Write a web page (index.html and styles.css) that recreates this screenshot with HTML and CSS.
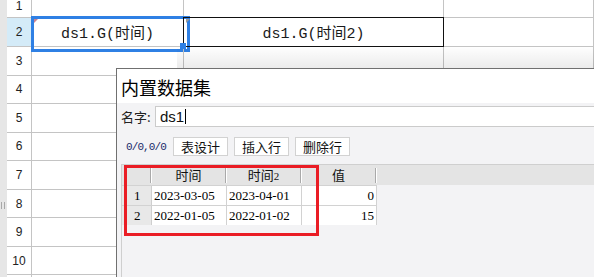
FILE: index.html
```html
<!doctype html>
<html lang="zh-CN">
  <head>
    <meta charset="UTF-8" />
    <meta name="viewport" content="width=device-width, initial-scale=1.0" />
    <title>内置数据集</title>
    <link rel="stylesheet" href="styles.css">
  </head>
  <body>
    <div class="sheet">
      <div class="row r1">
        <div class="gut"></div><div class="rh">1</div><div class="c ca"></div><div class="c cb"></div><div class="c cc"></div>
      </div>
      <div class="row r2">
        <div class="gut"></div><div class="rh sel">2</div>
        <div class="c ca active"><span class="flag red"></span>ds1.G(时间)<span class="handle"></span></div>
        <div class="c cb boxed"><span class="flag gray"></span>ds1.G(时间2)</div>
        <div class="c cc"></div>
      </div>
      <div class="row"><div class="gut"></div><div class="rh">3</div><div class="c ca"></div><div class="c cb"></div><div class="c cc"></div></div>
      <div class="row"><div class="gut"></div><div class="rh">4</div><div class="c ca"></div><div class="c cb"></div><div class="c cc"></div></div>
      <div class="row"><div class="gut"></div><div class="rh">5</div><div class="c ca"></div><div class="c cb"></div><div class="c cc"></div></div>
      <div class="row"><div class="gut"></div><div class="rh">6</div><div class="c ca"></div><div class="c cb"></div><div class="c cc"></div></div>
      <div class="row"><div class="gut"></div><div class="rh">7</div><div class="c ca"></div><div class="c cb"></div><div class="c cc"></div></div>
      <div class="row"><div class="gut"><span class="grip"></span></div><div class="rh">8</div><div class="c ca"></div><div class="c cb"></div><div class="c cc"></div></div>
      <div class="row"><div class="gut"></div><div class="rh">9</div><div class="c ca"></div><div class="c cb"></div><div class="c cc"></div></div>
      <div class="row"><div class="gut"></div><div class="rh">10</div><div class="c ca"></div><div class="c cb"></div><div class="c cc"></div></div>
      <div class="row"><div class="gut"></div><div class="rh"></div><div class="c ca"></div><div class="c cb"></div><div class="c cc"></div></div>
    </div>

    <div class="dialog">
      <div class="dlg-title">内置数据集</div>
      <div class="dlg-body">
        <div class="name-row">
          <span class="label">名字:</span>
          <div class="input">ds1<span class="caret"></span></div>
        </div>
        <div class="toolbar">
          <span class="counter">0/0,0/0</span>
          <button class="btn">表设计</button>
          <button class="btn">插入行</button>
          <button class="btn">删除行</button>
        </div>
        <div class="grid-wrap">
          <div class="thead">
            <div class="th th-rh"></div>
            <div class="th">时间</div>
            <div class="th">时间<span class="small">2</span></div>
            <div class="th">值</div>
          </div>
          <div class="tr">
            <div class="td td-rh">1</div>
            <div class="td">2023-03-05</div>
            <div class="td">2023-04-01</div>
            <div class="td num">0</div>
          </div>
          <div class="tr">
            <div class="td td-rh">2</div>
            <div class="td">2022-01-05</div>
            <div class="td">2022-01-02</div>
            <div class="td num">15</div>
          </div>
          <div class="mark"></div>
        </div>
      </div>
    </div>
  </body>
</html>
```

FILE: styles.css
```css
* {
  box-sizing: border-box;
}
body {
  margin: 0;
  width: 594px;
  height: 277px;
  overflow: hidden;
  position: relative;
  background: #fff;
  font-family: "Noto Sans CJK SC", sans-serif;
  color: #111;
}

/* spreadsheet */
.sheet {
  display: flex;
  flex-direction: column;
}
.row {
  display: flex;
  height: 28.55px;
  flex: none;
}
.row.r1 {
  height: 18px;
}
.row.r2 {
  height: 29px;
}
.gut {
  width: 7px;
  background: #e6e6e6;
  position: relative;
}
.grip {
  position: absolute;
  left: 1px;
  top: 12px;
  width: 4px;
  height: 7px;
  border-left: 1px solid #a8a8a8;
  border-right: 1px solid #a8a8a8;
}
.rh {
  width: 25px;
  border-right: 1px solid #c4c4c4;
  border-bottom: 1px solid #c4c4c4;
  display: flex;
  align-items: center;
  justify-content: center;
  font: 12px "Liberation Sans", sans-serif;
  color: #222;
}
.r1 .rh {
  align-items: flex-end;
  padding-bottom: 6px;
  line-height: 10px;
}
.rh.sel {
  background: #d4ebf8;
}
.c {
  border-right: 1px solid #c4c4c4;
  border-bottom: 1px solid #c4c4c4;
  position: relative;
  display: flex;
  align-items: center;
  justify-content: center;
  font: 15px "Liberation Mono", "Noto Sans CJK SC", monospace;
  color: #1a1a1a;
}
.ca {
  width: 152px;
}
.cb {
  width: 260px;
}
.cc {
  flex: 1;
}
.active::after {
  content: "";
  position: absolute;
  left: -1px;
  top: -2px;
  width: 153px;
  height: 30px;
  border: 3px solid #2f80e4;
}
.handle {
  position: absolute;
  left: 148px;
  top: 25px;
  width: 6px;
  height: 6px;
  background: #2f80e4;
  z-index: 1;
}
.boxed::after {
  content: "";
  position: absolute;
  left: -1px;
  top: -1px;
  right: -1px;
  bottom: -1px;
  border: 1px solid #111;
}
.flag {
  position: absolute;
  left: 2px;
  top: 1px;
  width: 0;
  height: 0;
  border-top: 4px solid #c9828f;
  border-right: 4px solid transparent;
  z-index: 1;
}
.flag.gray {
  border-top-color: #9a9a9a;
}

/* dialog window */
.dialog {
  position: absolute;
  left: 116px;
  top: 68px;
  right: 0;
  bottom: 0;
  border-top: 1px solid #707070;
  border-left: 1px solid #707070;
  background: #f3f3f5;
  display: flex;
  flex-direction: column;
}
.dialog::before {
  content: "";
  position: absolute;
  left: 60px;
  right: 0;
  top: -23px;
  height: 22px;
  background: linear-gradient(to bottom, rgba(0, 0, 0, 0), rgba(0, 0, 0, 0.08));
}
.dlg-title {
  height: 34px;
  background: #fff;
  padding: 2px 0 0 4px;
  font-size: 18px;
  line-height: 32px;
  color: #000;
}
.dlg-body {
  flex: 1;
  display: flex;
  flex-direction: column;
  padding-left: 4px;
}
.name-row {
  display: flex;
  align-items: center;
  margin-top: 3px;
  height: 21px;
}
.label {
  width: 34px;
  font-size: 13px;
  color: #222;
}
.input {
  flex: 1;
  height: 21px;
  border: 1px solid #cbcbcb;
  border-right: none;
  background: #fff;
  padding-left: 4px;
  display: flex;
  align-items: center;
  font: 15px "Liberation Sans", sans-serif;
  color: #111;
}
.caret {
  width: 1px;
  height: 15px;
  background: #000;
  margin-left: 1px;
}
.toolbar {
  display: flex;
  align-items: center;
  margin-top: 10px;
  height: 19px;
}
.counter {
  width: 52px;
  padding-left: 5px;
  font: 11px "Liberation Mono", monospace;
  letter-spacing: -0.9px;
  color: #1a2a6a;
}
.btn {
  width: 55px;
  height: 19px;
  margin-right: 6px;
  padding: 0;
  border: 1px solid #d2d2d2;
  background: #fff;
  font: 13px "Noto Sans CJK SC", sans-serif;
  line-height: 17px;
  color: #111;
}
.grid-wrap {
  flex: 1;
  margin-top: 8px;
  border-top: 1px solid #cfcfcf;
  border-left: 1px solid #cfcfcf;
  position: relative;
}
.thead {
  display: flex;
  height: 20px;
  background: #e4e4e4;
}
.th {
  width: 75px;
  position: relative;
  text-align: center;
  font-size: 13px;
  line-height: 20px;
  color: #111;
}
.th.th-rh {
  width: 29px;
}
.th::after {
  content: "";
  position: absolute;
  right: 0;
  top: 3px;
  bottom: 2px;
  width: 1px;
  background: #a9a9a9;
  box-shadow: 1px 0 0 #fff;
}
.small {
  font: 11px "Liberation Serif", serif;
}
.tr {
  display: flex;
  height: 20px;
  width: 255px;
  border-top: 1px solid #d2d2d2;
}
.tr:last-of-type {
  height: 21px;
  border-bottom: 1px solid #d2d2d2;
}
.td {
  width: 75px;
  background: #fff;
  border-right: 1px solid #d2d2d2;
  padding: 0 2px;
  font: 13px "Liberation Serif", serif;
  line-height: 19px;
  color: #000;
}
.td.td-rh {
  width: 30px;
  background: #e8e8e8;
  border-right-color: #cfcfcf;
  padding-left: 12px;
}
.td.num {
  text-align: right;
}
.mark {
  position: absolute;
  left: 2px;
  top: 0;
  width: 195px;
  height: 71px;
  border: 3px solid #ea1d25;
}
```
